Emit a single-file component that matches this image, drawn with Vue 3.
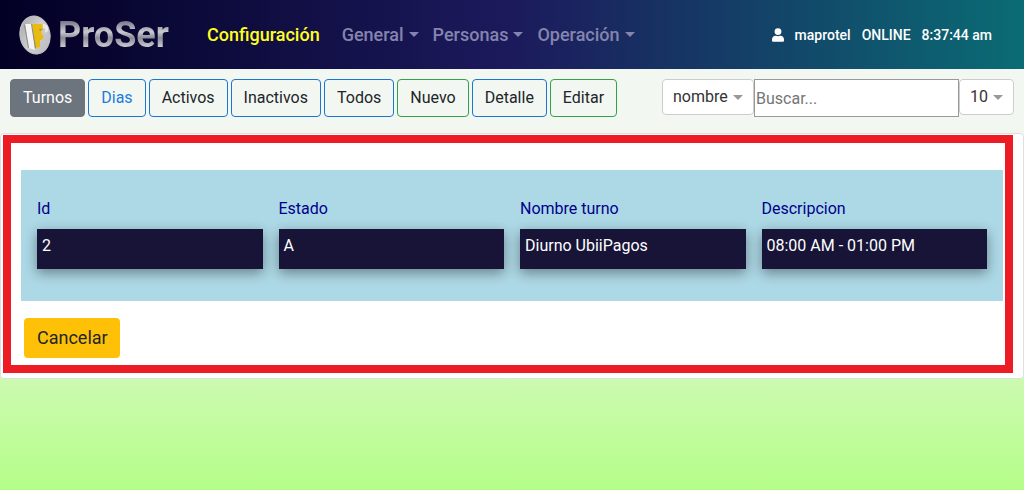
<script setup>
import { ref } from 'vue'

const menus = ['General', 'Personas', 'Operación']
const actions = [
  { label: 'Turnos', kind: 'active' },
  { label: 'Dias', kind: 'link' },
  { label: 'Activos', kind: 'blue' },
  { label: 'Inactivos', kind: 'blue' },
  { label: 'Todos', kind: 'blue' },
  { label: 'Nuevo', kind: 'green' },
  { label: 'Detalle', kind: 'blue' },
  { label: 'Editar', kind: 'green' }
]
const fields = [
  { label: 'Id', value: '2' },
  { label: 'Estado', value: 'A' },
  { label: 'Nombre turno', value: 'Diurno UbiiPagos' },
  { label: 'Descripcion', value: '08:00 AM - 01:00 PM' }
]
const column = ref('nombre')
const search = ref('')
const pageSize = ref('10')
</script>

<template>
  <div class="page">
    <header class="navbar">
      <a class="brand" href="#">
        <svg class="emblem" viewBox="0 0 34 40" aria-hidden="true">
          <defs>
            <linearGradient id="disc" x1="0" y1="0" x2="1" y2="1">
              <stop offset="0" stop-color="#a4a4a8" />
              <stop offset="0.5" stop-color="#cfcfd0" />
              <stop offset="1" stop-color="#b8b8bc" />
            </linearGradient>
          </defs>
          <ellipse cx="17" cy="20" rx="15" ry="19" transform="rotate(-10 17 20)" fill="url(#disc)" stroke="#c6c6c8" />
          <path d="M7 9h7l3 26-6-2z" fill="#f4f4f4" />
          <path d="M7 9l-1 1 4 23 1 0z" fill="#8d8d90" />
          <path d="M14 9h10l1 5-2 1 1 5 2 1-2 4h-2v7l-5 1z" fill="#e8bb12" />
          <path d="M13 9h1l4 24-1 1z" fill="#8f8a70" />
          <path d="M25 9c4 0 6 3 5 7l-3 2 0-2c1-2 0-3-2-3z" fill="#e9e9e9" />
          <path d="M21 14l4 0-1 1-2 1z" fill="#c1930c" />
        </svg>
        <span class="brand-name">ProSer</span>
      </a>
      <nav class="menu">
        <a class="current" href="#">Configuración</a>
        <button v-for="m in menus" :key="m" type="button" class="menu-item">
          {{ m }}<span class="caret"></span>
        </button>
      </nav>
      <div class="session">
        <svg class="user" viewBox="0 0 448 512" aria-hidden="true">
          <path fill="#fff" d="M224 256a128 128 0 1 0 0-256 128 128 0 0 0 0 256zm90 32h-17a174 174 0 0 1-146 0h-17C60 288 0 348 0 422v42c0 27 21 48 48 48h352c27 0 48-21 48-48v-42c0-74-60-134-134-134z" />
        </svg>
        <span>maprotel</span>
        <span>ONLINE</span>
        <span>8:37:44 am</span>
      </div>
    </header>

    <div class="toolbar">
      <div class="actions">
        <button v-for="a in actions" :key="a.label" type="button" class="btn" :class="a.kind">{{ a.label }}</button>
      </div>
      <div class="filters">
        <div class="picker">
          <select v-model="column" aria-label="Columna"><option>nombre</option></select>
          <span class="caret"></span>
        </div>
        <input v-model="search" class="search" type="text" placeholder="Buscar..." aria-label="Buscar" />
        <div class="picker">
          <select v-model="pageSize" aria-label="Registros por página"><option>10</option></select>
          <span class="caret"></span>
        </div>
      </div>
    </div>

    <main class="card">
      <section class="frame">
        <dl class="details">
          <div v-for="f in fields" :key="f.label">
            <dt>{{ f.label }}</dt>
            <dd>{{ f.value }}</dd>
          </div>
        </dl>
        <button type="button" class="cancel">Cancelar</button>
      </section>
    </main>
  </div>
</template>

<style>
body {
  margin: 0;
}
</style>

<style scoped>
.page,
.page * {
  box-sizing: border-box;
}
.page {
  min-height: 100vh;
  font: 16px/24px Roboto, sans-serif;
  color: #212529;
  background: linear-gradient(#f3f7f2 0, #f3f7f2 120px, #ccfab0 380px, #b4fe88 100%);
}
button,
select,
input {
  font: inherit;
  color: inherit;
}
button {
  cursor: pointer;
}
.navbar {
  display: flex;
  align-items: center;
  height: 69px;
  padding: 0 32px 0 18px;
  background: linear-gradient(90deg, #020024 0%, #1c1a5c 50%, #0a6c74 100%);
}
.brand {
  display: flex;
  align-items: center;
  gap: 6px;
  width: 151px;
  text-decoration: none;
}
.emblem {
  flex: none;
  width: 34px;
  height: 40px;
}
.brand-name {
  font: 700 36px/40px Roboto, sans-serif;
  color: transparent;
  background: linear-gradient(#77778a 6px, #c9c9cf 17px, #8b8b98 23px, #d9d9dd 34px);
  background-clip: text;
}
.menu {
  display: flex;
  align-items: center;
  gap: 14px;
  margin-left: 38px;
  font-size: 18px;
  font-weight: 500;
}
.current {
  margin-right: 8px;
  color: #ffff1e;
  text-decoration: none;
}
.menu-item {
  display: flex;
  align-items: center;
  gap: 5px;
  padding: 0;
  border: 0;
  background: none;
  color: #8584ae;
}
.caret {
  border: 5px solid transparent;
  border-top-color: currentColor;
  border-bottom: 0;
}
.session {
  display: flex;
  align-items: center;
  gap: 11px;
  margin-left: auto;
  color: #fff;
  font-size: 14px;
  font-weight: 500;
}
.user {
  width: 12px;
  height: 14px;
}
.toolbar {
  display: flex;
  align-items: flex-start;
  justify-content: space-between;
  padding: 10px 10px 16px;
}
.actions {
  display: flex;
  gap: 3px;
}
.btn {
  height: 38px;
  padding: 0 12px;
  border: 1px solid #1b74d0;
  border-radius: 4px;
  background: transparent;
}
.btn.active {
  border-color: #6c757d;
  background: #6c757d;
  color: #fff;
}
.btn.link {
  color: #1b7be0;
}
.btn.green {
  border-color: #34a04a;
}
.filters {
  display: flex;
  align-items: flex-start;
}
.picker {
  display: grid;
  align-items: center;
}
.picker > * {
  grid-area: 1 / 1;
}
.picker select {
  height: 36px;
  padding: 0 25px 0 10px;
  border: 1px solid #ccc;
  border-radius: 4px;
  appearance: none;
  background: #fff;
  color: #333;
}
.picker .caret {
  justify-self: end;
  margin-right: 11px;
  color: #999;
  pointer-events: none;
}
.search {
  width: 205px;
  height: 38px;
  padding: 0 1px;
  border: 1px solid #999;
  border-radius: 0;
  background: #fff;
}
.search::placeholder {
  color: #757575;
}
.card {
  padding: 1px 10px 5px 2px;
  border: 1px solid #dfdfdf;
  border-radius: 4px;
  background: #fff;
}
.frame {
  padding: 27px 2px 7px 10px;
  border: 8px solid #ed1c24;
}
.details {
  display: grid;
  grid-template-columns: repeat(4, 1fr);
  gap: 16px;
  margin: 0 0 17px;
  padding: 27px 16px 32px;
  background: #add8e6;
}
dt {
  margin-bottom: 8px;
  color: #00008b;
}
dd {
  height: 40px;
  margin: 0;
  padding: 5px;
  background: #171438;
  color: #fff;
  box-shadow: 0 4px 12px rgba(0, 0, 0, 0.4);
}
.cancel {
  display: block;
  height: 40px;
  margin-left: 3px;
  padding: 0 12px 0 13px;
  border: 0;
  border-radius: 4px;
  background: #ffc107;
  font-size: 18px;
}
</style>
